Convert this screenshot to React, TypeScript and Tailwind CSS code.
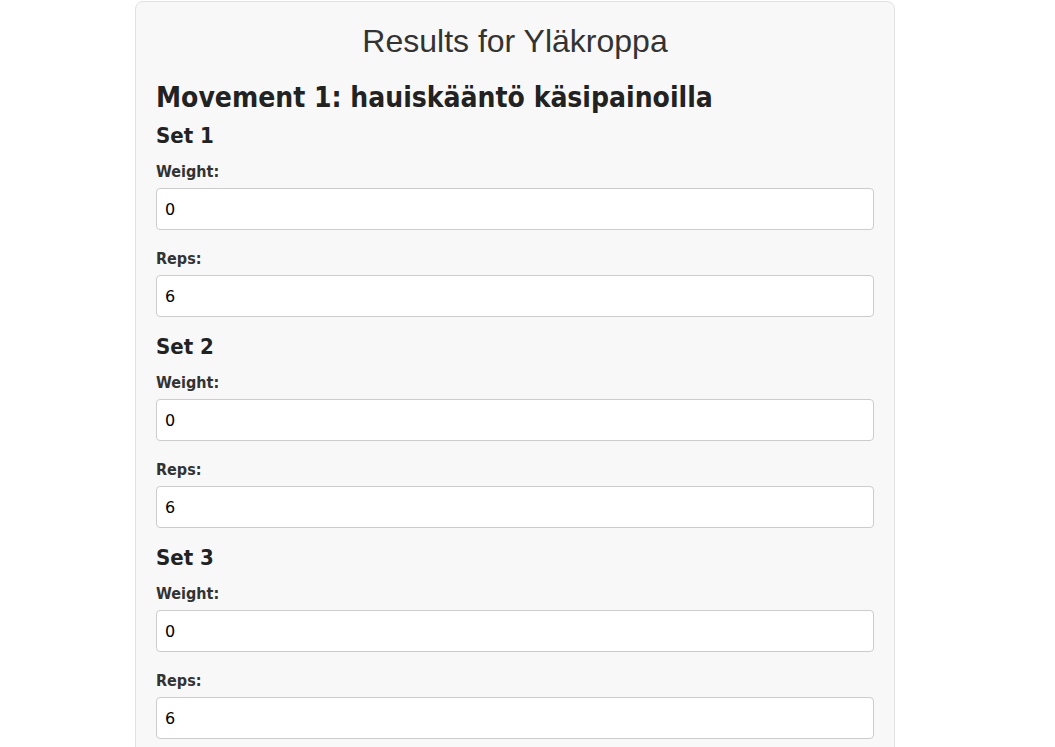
import { useState } from 'react';

type SetRow = { weight: string; reps: string };

const heading = { fontFamily: '"DejaVu Sans Condensed", "DejaVu Sans", sans-serif' };

export default function App() {
  const [sets, setSets] = useState<SetRow[]>([
    { weight: '0', reps: '6' },
    { weight: '0', reps: '6' },
    { weight: '0', reps: '6' },
  ]);

  const update = (i: number, key: keyof SetRow, value: string) => {
    setSets((prev) => prev.map((s, idx) => (idx === i ? { ...s, [key]: value } : s)));
  };

  return (
    <div className="min-h-screen bg-white pt-px">
      <div className="ml-[135px] w-[760px] rounded-lg border border-[#e2e2e2] bg-[#f8f8f8] p-5" style={heading}>
        <h1 className="text-center font-['Liberation_Sans',Arial,sans-serif] text-[32px] leading-[38px] text-[#333]">
          Results for Yläkroppa
        </h1>
        <h2 className="mt-[22px] text-[28px] font-bold leading-[32px] text-[#222]">
          Movement 1: hauiskääntö käsipainoilla
        </h2>
        {sets.map((s, i) => (
          <div key={i} className={i === 0 ? 'mt-2' : 'mt-4'}>
            <h3 className="text-[22px] font-bold leading-[28px] text-[#222]">Set {i + 1}</h3>
            <label className="mt-3 block text-[16px] font-bold leading-[20px] text-[#333]">Weight:</label>
            <input
              type="number"
              value={s.weight}
              onChange={(e) => update(i, 'weight', e.target.value)}
              className="mt-[6px] block h-[42px] w-full rounded border border-[#cccccc] bg-white px-2 font-['DejaVu_Sans',sans-serif] text-[16px] text-black outline-none"
            />
            <label className="mt-[19px] block text-[16px] font-bold leading-[20px] text-[#333]">Reps:</label>
            <input
              type="number"
              value={s.reps}
              onChange={(e) => update(i, 'reps', e.target.value)}
              className="mt-[6px] block h-[42px] w-full rounded border border-[#cccccc] bg-white px-2 font-['DejaVu_Sans',sans-serif] text-[16px] text-black outline-none"
            />
          </div>
        ))}
      </div>
    </div>
  );
}
